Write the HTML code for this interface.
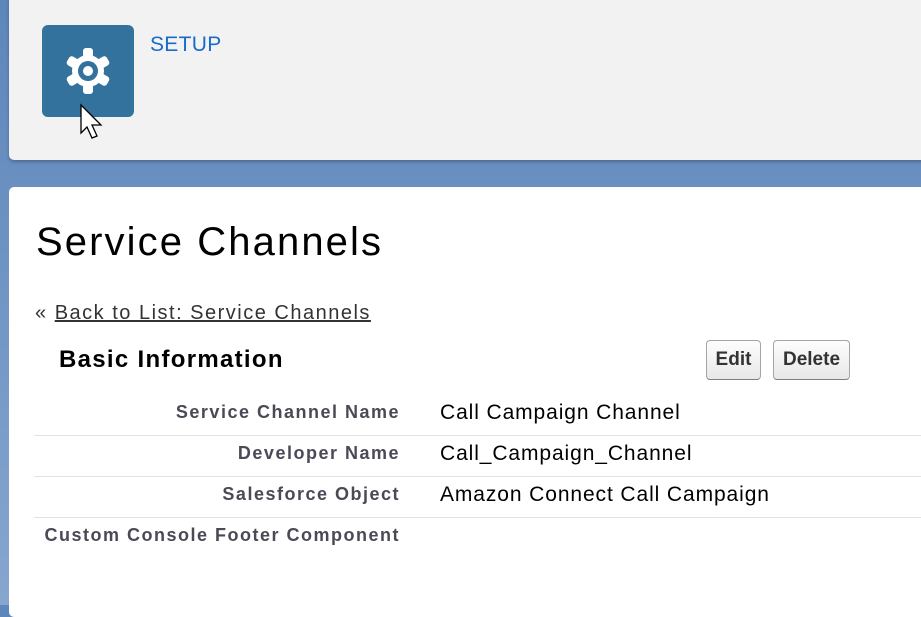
<html><head><style>
body{margin:0;width:921px;height:605px;overflow:hidden;background:linear-gradient(180deg,#5d86ba,#86a6cf);font-family:"Liberation Sans",sans-serif;position:relative}
.hdr{position:absolute;left:9px;top:-5px;width:930px;height:165px;background:#f2f2f2;border-radius:5px;box-shadow:0 2px 3px rgba(0,0,0,.25)}
.ico{position:absolute;left:42px;top:25px;width:92px;height:92px;background:#32729c;border-radius:6px}
.setup{position:absolute;left:150px;top:33px;font-size:21px;color:#1a6bc9;letter-spacing:0.3px}
.main{position:absolute;left:9px;top:187px;width:930px;height:430px;background:#fff;border-radius:5px}
h1{position:absolute;left:36px;top:220px;margin:0;font-weight:normal;font-size:40px;letter-spacing:2.1px;color:#000}
.back{position:absolute;left:35px;top:302px;font-size:20px;color:#333;letter-spacing:1.5px}
.back u{color:#333}
.bi{position:absolute;left:59px;top:346px;font-size:24px;font-weight:bold;color:#000;letter-spacing:1.3px}
.btn{position:absolute;top:340px;height:40px;box-sizing:border-box;border:1px solid #a5a5a5;border-bottom-color:#7f7f7f;border-radius:4px;background:linear-gradient(#fdfdfd,#e8e8e8);font-weight:bold;font-size:19px;color:#333;text-align:center;line-height:38px}
.row{position:absolute;left:34px;width:900px;height:41px;border-bottom:1px solid #e3e3e3}
.lab{position:absolute;right:534px;top:8px;font-size:18px;font-weight:bold;color:#4a4a56;white-space:nowrap;letter-spacing:1.5px}
.val{position:absolute;left:406px;top:7px;font-size:21px;color:#000;white-space:nowrap;letter-spacing:0.9px}
</style></head><body>
<div class="hdr"></div>
<div class="ico"><svg width="92" height="92" viewBox="0 0 92 92"><g fill="#fff" transform="translate(46,46)">
<g id="t"><rect x="-5" y="-23" width="10" height="10" rx="3"/></g>
<use href="#t" transform="rotate(60)"/><use href="#t" transform="rotate(120)"/><use href="#t" transform="rotate(180)"/><use href="#t" transform="rotate(240)"/><use href="#t" transform="rotate(300)"/>
<circle r="16"/></g><circle cx="46" cy="46" r="10" fill="#32729c"/><circle cx="46" cy="46" r="5" fill="#fff"/></svg></div>
<svg style="position:absolute;left:79px;top:103px" width="28" height="40"><path d="M2 2 L2 30 L8 24 L13 35 L18 33 L13 22 L22 22 Z" fill="#fff" stroke="#000" stroke-width="1.3"/></svg>
<div class="setup">SETUP</div>
<div class="main"></div>
<h1>Service Channels</h1>
<div class="back">« <u>Back to List: Service Channels</u></div>
<div class="bi">Basic Information</div>
<div class="btn" style="left:706px;width:55px">Edit</div>
<div class="btn" style="left:773px;width:77px">Delete</div>
<div class="row" style="top:394px"><span class="lab">Service Channel Name</span><span class="val">Call Campaign Channel</span></div>
<div class="row" style="top:435px"><span class="lab">Developer Name</span><span class="val">Call_Campaign_Channel</span></div>
<div class="row" style="top:476px"><span class="lab">Salesforce Object</span><span class="val">Amazon Connect Call Campaign</span></div>
<div class="row" style="top:517px;border:none"><span class="lab">Custom Console Footer Component</span></div>
</body></html>
